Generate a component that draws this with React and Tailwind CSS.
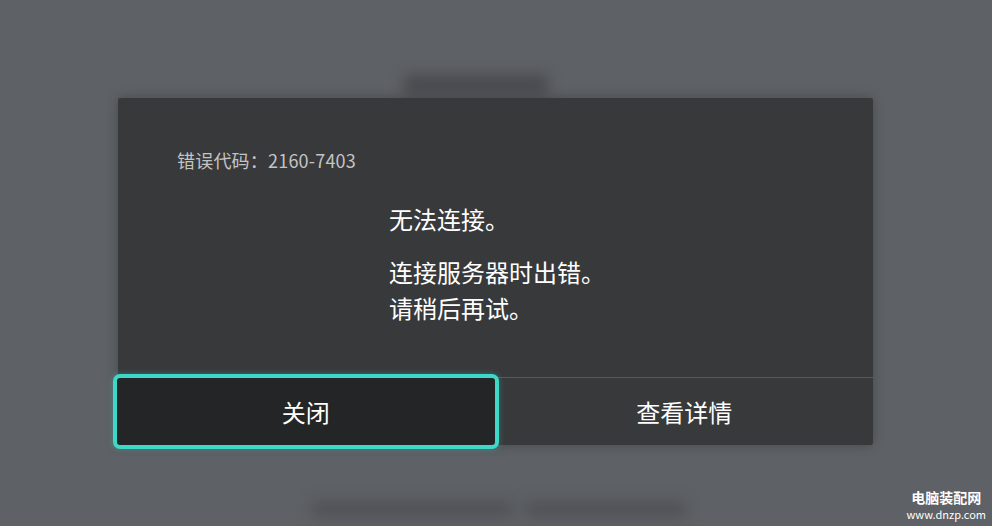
const font = { fontFamily: '"Noto Sans CJK SC", "Noto Sans", sans-serif' }

function Backdrop() {
  // the blurred screen behind the dialog
  return (
    <div className="flex h-full flex-col pt-[75px]">
      <div className="ml-[404px] h-[20px] w-[144px] rounded-sm bg-[#474a4e] blur-[7px]" />
      <div className="ml-[404px] mt-[22px] h-[14px] w-[70px] rounded-sm bg-[#45484c] blur-[5px]" />
      <div className="ml-[312px] mt-[370px] flex gap-[14px]">
        <div className="h-[16px] w-[200px] rounded-sm bg-[#4f5256] blur-[7px]" />
        <div className="h-[16px] w-[160px] rounded-sm bg-[#4f5256] blur-[7px]" />
      </div>
    </div>
  )
}

export default function App() {
  return (
    <div className="relative h-[526px] w-[992px] overflow-hidden bg-[#5e6165]" style={font}>
      <Backdrop />

      <div className="absolute left-[118px] top-[98px] flex h-[347px] w-[755px] flex-col rounded-[2px] bg-[#38393b] shadow-[0_0_12px_rgba(0,0,0,0.25)]">
        <div className="h-[279px] pl-[59px] pt-[50px]">
          <p className="text-[18px] leading-[24px] tracking-[0.2px] text-[#c4c4c4]">错误代码：2160-7403</p>
        </div>

        <div className="grid flex-1 grid-cols-2 border-t border-[#58595c]">
          <div className="relative">
            <div className="absolute -left-[5px] -right-[3px] -top-[4px] -bottom-[4px] flex items-center justify-center rounded-[7px] border-[4px] border-[#3ed8c8] bg-[#242526] shadow-[0_0_6px_rgba(62,216,200,0.35)]">
              <span className="text-[24px] text-white">关闭</span>
            </div>
          </div>
          <button type="button" className="flex items-center justify-center text-[24px] text-white">
            查看详情
          </button>
        </div>
      </div>

      <div className="absolute left-[389px] top-[201px] text-[24px] leading-[36px] text-white">
        <p>无法连接。</p>
        <p className="mt-[17px]">连接服务器时出错。</p>
        <p>请稍后再试。</p>
      </div>

      <div className="absolute right-[6px] top-[488px] flex flex-col items-center">
        <span className="text-[14px] font-bold leading-[18px] text-white">电脑装配网</span>
        <span className="text-[11px] leading-[16px] text-white">www.dnzp.com</span>
      </div>
    </div>
  )
}
